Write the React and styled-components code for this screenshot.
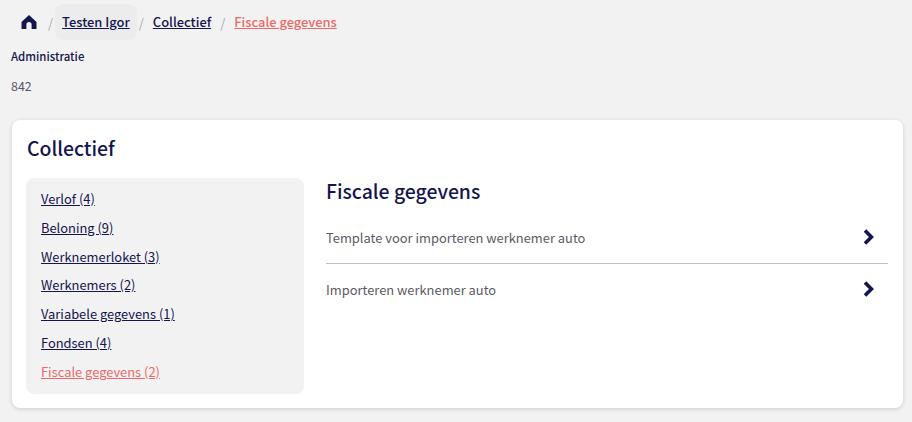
import React from 'react';
import styled, { createGlobalStyle } from 'styled-components';

const navy = '#14144f';
const coral = '#e96a6a';

const GlobalStyle = createGlobalStyle`
  html, body {
    margin: 0;
    padding: 0;
    background: #f2f2f2;
    font-family: "Noto Sans CJK SC", "Noto Sans", sans-serif;
  }
`;

const menuItems = [
  'Verlof (4)',
  'Beloning (9)',
  'Werknemerloket (3)',
  'Werknemers (2)',
  'Variabele gegevens (1)',
  'Fondsen (4)',
];

const App = () => (
  <Page>
    <GlobalStyle />
    <Breadcrumbs>
      <HomeLink href="#">
        <svg width="16" height="16" viewBox="0 0 16 16" fill={navy}>
          <path d="M8 1 L15.5 8 V15 H10.6 V10.6 A2.6 2.6 0 0 0 5.4 10.6 V15 H0.5 V8 Z" />
        </svg>
      </HomeLink>
      <Separator>/</Separator>
      <CrumbPill><Crumb href="#">Testen Igor</Crumb></CrumbPill>
      <Separator>/</Separator>
      <Crumb href="#">Collectief</Crumb>
      <Separator>/</Separator>
      <Crumb href="#" $active>Fiscale gegevens</Crumb>
    </Breadcrumbs>

    <FieldLabel>Administratie</FieldLabel>
    <FieldValue>842</FieldValue>

    <Card>
      <CardTitle>Collectief</CardTitle>
      <Columns>
        <SideMenu>
          {menuItems.map((item) => (
            <MenuLink href="#" key={item}>{item}</MenuLink>
          ))}
          <MenuLink href="#" $active>Fiscale gegevens (2)</MenuLink>
        </SideMenu>
        <Content>
          <ContentTitle>Fiscale gegevens</ContentTitle>
          <Row>
            <RowLabel>Template voor importeren werknemer auto</RowLabel>
            <Chevron />
          </Row>
          <Row $last>
            <RowLabel>Importeren werknemer auto</RowLabel>
            <Chevron />
          </Row>
        </Content>
      </Columns>
    </Card>
  </Page>
);

const Chevron = () => (
  <ChevronIcon width="12" height="16" viewBox="0 0 12 16" fill="none" stroke={navy} strokeWidth="3.6">
    <path d="M2 1.6 L8.4 8 L2 14.4" />
  </ChevronIcon>
);

const Page = styled.div`
  width: 912px;
  height: 422px;
  box-sizing: border-box;
  padding: 4px 9px 0 11px;
  overflow: hidden;
`;

const Breadcrumbs = styled.nav`
  display: flex;
  align-items: center;
  height: 36px;
  font-size: 12.9px;
  font-weight: 500;
`;

const HomeLink = styled.a`
  display: flex;
  margin: 0 2px 0 10px;
`;

const Separator = styled.span`
  color: #aaaaaa;
  font-weight: 400;
  font-size: 13px;
  margin: 0 9px;
`;

const CrumbPill = styled.span`
  display: flex;
  align-items: center;
  height: 36px;
  padding: 0 7px;
  margin: 0 -7px;
  border-radius: 8px;
  background: #ececec;
`;

const Crumb = styled.a`
  color: ${({ $active }) => ($active ? coral : navy)};
  text-decoration: underline;
  line-height: 20px;
`;

const FieldLabel = styled.div`
  margin-top: 7px;
  font-size: 11.4px;
  font-weight: 500;
  line-height: 18px;
  color: ${navy};
`;

const FieldValue = styled.div`
  margin-top: 12px;
  font-size: 12.4px;
  line-height: 18px;
  color: #55555f;
`;

const Card = styled.section`
  box-sizing: border-box;
  margin: 25px 0 0 1px;
  width: 891px;
  height: 288px;
  padding: 13px 15px 14px 15px;
  background: #ffffff;
  border-radius: 8px;
  box-shadow: 0 1px 4px rgba(0, 0, 0, 0.16);
`;

const CardTitle = styled.h2`
  margin: 0;
  font-size: 19.4px;
  font-weight: 500;
  line-height: 30px;
  color: ${navy};
`;

const Columns = styled.div`
  display: flex;
  gap: 22px;
  margin-top: 15px;
  margin-left: -1px;
`;

const SideMenu = styled.div`
  box-sizing: border-box;
  flex: 0 0 278px;
  height: 216px;
  padding: 11px 15px;
  display: flex;
  flex-direction: column;
  align-items: flex-start;
  gap: 8.8px;
  background: #f2f2f2;
  border-radius: 8px;
`;

const MenuLink = styled.a`
  font-size: 12.9px;
  line-height: 20px;
  color: ${({ $active }) => ($active ? coral : navy)};
  text-decoration: underline;
`;

const Content = styled.div`
  flex: 1;
  margin-top: -1px;
`;

const ContentTitle = styled.h3`
  margin: 0;
  font-size: 19.4px;
  font-weight: 500;
  line-height: 28px;
  color: ${navy};
`;

const Row = styled.div`
  display: flex;
  align-items: center;
  justify-content: space-between;
  height: ${({ $last }) => ($last ? '50px' : '52px')};
  margin-top: ${({ $last }) => ($last ? '0' : '6px')};
  padding: 0 13px 0 0;
  border-bottom: ${({ $last }) => ($last ? 'none' : '1px solid #bdbdbd')};
`;

const RowLabel = styled.span`
  font-size: 12.9px;
  color: #5b5b63;
`;

const ChevronIcon = styled.svg`
  display: block;
`;

export default App;
